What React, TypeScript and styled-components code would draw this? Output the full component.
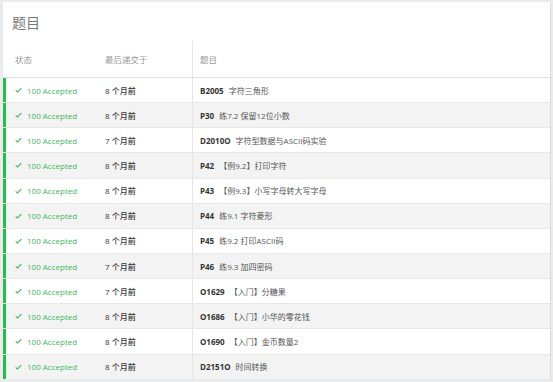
import React from 'react';
import styled, { createGlobalStyle } from 'styled-components';

const GlobalStyle = createGlobalStyle`
    html, body {
        margin: 0;
        padding: 0;
        background: #e9ecef;
        font-family: "Open Sans", "Noto Sans CJK SC", sans-serif;
        overflow: hidden;
    }
`;

const Card = styled.div`
    margin: 2px 3px 0 3px;
    width: 547px;
    background: #ffffff;
    box-shadow: 1px 1px 0 #d9dde1;
`;

const CardTitle = styled.h1`
    margin: 0;
    height: 39px;
    padding-left: 9px;
    display: flex;
    align-items: center;
    font-size: 14px;
    font-weight: 400;
    color: #777777;
    font-family: "Noto Sans CJK SC", sans-serif;
`;

const Row = styled.div<{ $head?: boolean; $alt?: boolean }>`
    display: grid;
    grid-template-columns: 90px 99px 1fr;
    height: ${(p) => (p.$head ? '37px' : '25.15px')};
    box-sizing: border-box;
    border-bottom: 1px solid ${(p) => (p.$head ? '#dedede' : '#e8e8e8')};
    background: ${(p) => (p.$alt ? '#f3f3f3' : '#ffffff')};
    box-shadow: ${(p) => (p.$head ? 'none' : 'inset 3px 0 0 #22c046')};
    font-size: ${(p) => (p.$head ? '8.5px' : '8px')};
    color: ${(p) => (p.$head ? '#9a9a9a' : '#333333')};
`;

const Cell = styled.div<{ $divider?: boolean }>`
    display: flex;
    align-items: center;
    gap: 5px;
    padding-left: ${(p) => (p.$divider ? '7px' : '12px')};
    border-left: ${(p) => (p.$divider ? '1px solid #e6e6e6' : 'none')};
    white-space: nowrap;
    overflow: hidden;
`;

const Status = styled.span`
    display: flex;
    align-items: center;
    gap: 5px;
    color: #3cb95c;
`;

const When = styled.span`
    font-weight: 500;
    color: #333333;
`;

const ProblemId = styled.span`
    font-weight: 700;
    color: #333333;
`;

const ProblemName = styled.span`
    color: #555555;
`;

const Check = () => (
    <svg width="7" height="6" viewBox="0 0 7 6">
        <polyline points="0.7,3.3 2.5,4.9 6.3,1.1" fill="none" stroke="#3cb95c" strokeWidth="1.1" />
    </svg>
);

const records: [string, string, string][] = [
    ['8', 'B2005', '字符三角形'],
    ['8', 'P30', '练7.2 保留12位小数'],
    ['7', 'D2010O', '字符型数据与ASCII码实验'],
    ['8', 'P42', '【例9.2】打印字符'],
    ['8', 'P43', '【例9.3】小写字母转大写字母'],
    ['8', 'P44', '练9.1 字符菱形'],
    ['8', 'P45', '练9.2 打印ASCII码'],
    ['7', 'P46', '练9.3 加四密码'],
    ['7', 'O1629', '【入门】分糖果'],
    ['8', 'O1686', '【入门】小华的零花钱'],
    ['8', 'O1690', '【入门】金币数量2'],
    ['8', 'D2151O', '时间转换'],
];

export default function App() {
    return (
        <>
            <GlobalStyle />
            <Card>
                <CardTitle>题目</CardTitle>
                <Row $head>
                    <Cell>状态</Cell>
                    <Cell>最后递交于</Cell>
                    <Cell $divider>题目</Cell>
                </Row>
                {records.map(([months, id, name], i) => (
                    <Row key={id} $alt={i % 2 === 1}>
                        <Cell>
                            <Status>
                                <Check />
                                100 Accepted
                            </Status>
                        </Cell>
                        <Cell>
                            <When>{months} 个月前</When>
                        </Cell>
                        <Cell $divider>
                            <ProblemId>{id}</ProblemId>
                            <ProblemName>{name}</ProblemName>
                        </Cell>
                    </Row>
                ))}
            </Card>
        </>
    );
}
